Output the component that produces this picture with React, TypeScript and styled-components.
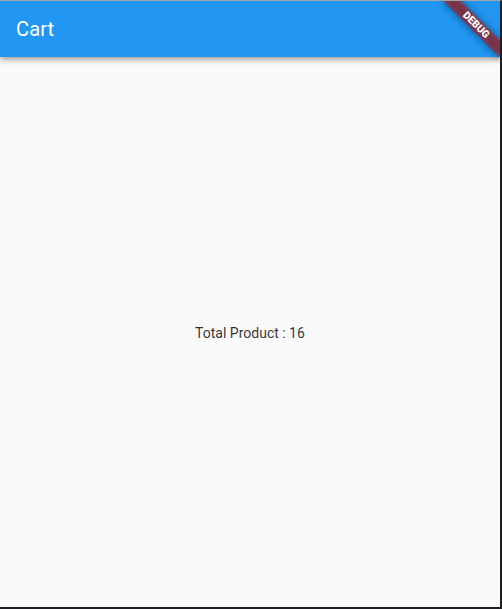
import React from "react";
import styled, { createGlobalStyle } from "styled-components";

const Global = createGlobalStyle`
  html, body { margin: 0; padding: 0; background: #202124; }
  * { box-sizing: border-box; }
`;

const Window = styled.div`
  width: 502px;
  height: 609px;
  border-top: 1px solid #a3a3a3;
  border-right: 2px solid #1f1f1f;
  border-bottom: 2px solid #1c1e24;
  display: flex;
`;

const Screen = styled.div`
  position: relative;
  flex: 1;
  overflow: hidden;
  display: flex;
  flex-direction: column;
  background: #fafafa;
  font-family: Roboto, "Noto Sans", sans-serif;
`;

const AppBar = styled.header`
  height: 56px;
  flex: 0 0 56px;
  background: #2196f3;
  display: flex;
  align-items: center;
  padding: 0 16px;
  position: relative;
  z-index: 1;
  box-shadow: 0 2px 4px -1px rgba(0, 0, 0, 0.2), 0 4px 5px 0 rgba(0, 0, 0, 0.14),
    0 1px 10px 0 rgba(0, 0, 0, 0.12);
`;

const Title = styled.h1`
  margin: 0;
  color: #ffffff;
  font-size: 20px;
  font-weight: 400;
  letter-spacing: 0.15px;
  line-height: 1;
`;

const Body = styled.main`
  flex: 1;
  display: flex;
  align-items: center;
  justify-content: center;
`;

const Label = styled.span`
  font-size: 14px;
  color: rgba(0, 0, 0, 0.82);
  margin-top: 2px;
`;

const BannerAnchor = styled.div`
  position: absolute;
  top: 0;
  right: 0;
  width: 0;
  height: 0;
  transform: rotate(45deg);
  transform-origin: 0 0;
  z-index: 2;
`;

const BannerShadow = styled.div`
  position: absolute;
  left: -40px;
  top: 28px;
  width: 80px;
  height: 12px;
  background: rgba(0, 0, 0, 0.5);
  filter: blur(4px);
`;

const BannerBand = styled.div`
  position: absolute;
  left: -40px;
  top: 28px;
  width: 80px;
  height: 12px;
  background: rgba(183, 28, 28, 0.627);
  color: #ffffff;
  font-size: 10.2px;
  font-weight: 900;
  line-height: 12px;
  text-align: center;
`;

export default function App() {
  return (
    <>
      <Global />
      <Window>
        <Screen>
          <AppBar>
            <Title>Cart</Title>
          </AppBar>
          <Body>
            <Label>Total Product : 16</Label>
          </Body>
          <BannerAnchor>
            <BannerShadow />
            <BannerBand>DEBUG</BannerBand>
          </BannerAnchor>
        </Screen>
      </Window>
    </>
  );
}
